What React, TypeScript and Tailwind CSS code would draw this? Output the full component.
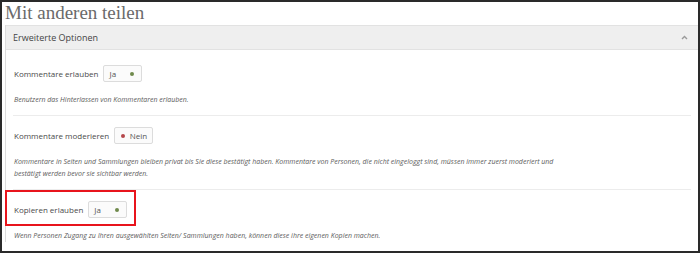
import type { ReactNode } from 'react';

// Sharing settings panel — "Mit anderen teilen"

type ToggleProps = { on: boolean };

function ToggleBox({ on }: ToggleProps) {
  return (
    <span className="inline-flex h-[17px] w-[39px] items-center justify-between rounded-[2px] border border-[#dcdcdc] bg-[#fbfbfb] px-[5px] text-[8px] text-[#555]">
      {on ? (
        <>
          <span>Ja</span>
          <span className="mr-[2px] h-[4px] w-[4px] rounded-full bg-[#6f8a4c]" />
        </>
      ) : (
        <>
          <span className="ml-[1px] h-[4px] w-[4px] rounded-full bg-[#b5474b]" />
          <span>Nein</span>
        </>
      )}
    </span>
  );
}

function SettingRow({
  label,
  on,
  children,
  first,
  last,
  highlight,
}: {
  label: string;
  on: boolean;
  children: ReactNode;
  first?: boolean;
  last?: boolean;
  highlight?: boolean;
}) {
  return (
    <div
      className={`relative ${first ? 'pt-[15px]' : 'pt-[11px]'} ${
        last ? '' : 'border-b border-[#ececec] pb-[9px]'
      }`}
    >
      <div className="flex items-center gap-[5px] pl-[1px]">
        <span className="text-[8px] text-[#4a4a4a]">{label}</span>
        <ToggleBox on={on} />
      </div>
      <p className="mt-[12px] pl-[1px] text-[7px] italic leading-[12px] text-[#5c5c5c]">{children}</p>

      {/* Annotation frame drawn over the row */}
      {highlight && (
        <span className="pointer-events-none absolute left-[-8px] top-[0px] h-[36px] w-[131px] border-2 border-[#e8141c]" />
      )}
    </div>
  );
}

export default function App() {
  return (
    <div
      className="h-[253px] w-[700px] overflow-hidden border-2 border-[#2a2a2a] bg-white pl-[3px]"
      style={{ fontFamily: '"Open Sans", sans-serif' }}
    >
      <h1
        className="h-[23px] text-[19px] leading-[22px] text-[#6a6a6a]"
        style={{ fontFamily: '"Liberation Serif", serif' }}
      >
        Mit anderen teilen
      </h1>

      <section className="border-l border-[#dcdcdc]">
        <header className="flex h-[25px] items-center justify-between border-y border-[#e2e2e2] bg-[#efefef] pl-[7px] pr-[10px]">
          <span className="text-[9px] text-[#444]">Erweiterte Optionen</span>
          <svg width="7" height="5" viewBox="0 0 7 5" className="text-[#9a9a9a]">
            <polyline points="1,4 3.5,1.5 6,4" fill="none" stroke="currentColor" strokeWidth="1.4" />
          </svg>
        </header>

        <div className="px-[7px]">
          <SettingRow label="Kommentare erlauben" on first>
            Benutzern das Hinterlassen von Kommentaren erlauben.
          </SettingRow>
          <SettingRow label="Kommentare moderieren" on={false}>
            Kommentare in Seiten und Sammlungen bleiben privat bis Sie diese bestätigt haben. Kommentare von
            Personen, die nicht eingeloggt sind, müssen immer zuerst moderiert und
            <br />
            bestätigt werden bevor sie sichtbar werden.
          </SettingRow>
          <SettingRow label="Kopieren erlauben" on last highlight>
            Wenn Personen Zugang zu Ihren ausgewählten Seiten/ Sammlungen haben, können diese ihre eigenen Kopien
            machen.
          </SettingRow>
        </div>
      </section>
    </div>
  );
}
